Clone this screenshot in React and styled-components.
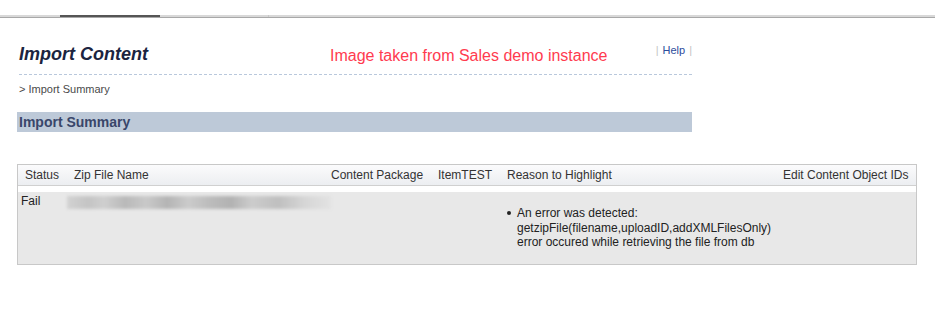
import React from 'react'
import styled, { createGlobalStyle } from 'styled-components'

const GlobalStyle = createGlobalStyle`
  body {
    margin: 0;
    background: #fff;
    font-family: "Liberation Sans", Arial, sans-serif;
  }
`

const TopNav = styled.div`
  display: flex;
  align-items: flex-end;
  height: 17px;
  border-bottom: 1px solid #a8a8a8;
`
const NavTab = styled.div`
  width: ${(p) => p.width}px;
  height: 2px;
  background: ${(p) => (p.active ? '#555' : '#d8d8d8')};
  border-right: ${(p) => (p.divider ? '1px solid #c8c8c8' : 'none')};
`

const Page = styled.div`
  padding: 0 17px;
`
const Header = styled.div`
  width: 675px;
`
const TitleRow = styled.div`
  display: grid;
  grid-template-columns: 311px 1fr auto;
  align-items: center;
  height: 56px;
  margin-left: 2px;
  border-bottom: 1px dashed #b9c8dc;
`
const Title = styled.h1`
  margin: 16px 0 0 0;
  font-size: 18px;
  font-style: italic;
  font-weight: bold;
  color: #1b2440;
`
const Annotation = styled.span`
  font-size: 16px;
  color: #ff3b4f;
  margin-top: 20px;
`
const HelpLinks = styled.div`
  align-self: start;
  margin-top: 26px;
  font-size: 11px;
  color: #c4c4c4;
`
const HelpLink = styled.a`
  color: #2c4c9c;
  text-decoration: none;
  margin: 0 4px;
`
const Breadcrumb = styled.div`
  padding: 8px 2px 0;
  height: 22px;
  font-size: 11px;
  color: #4a4a4a;
`
const SectionBar = styled.div`
  margin-top: 7px;
  height: 20px;
  line-height: 20px;
  padding-left: 2px;
  background: #bdc9d8;
  font-size: 14px;
  font-weight: bold;
  color: #39466a;
`

const Table = styled.div`
  margin-top: 32px;
  width: 898px;
  border: 1px solid #c8c8c8;
`
const Row = styled.div`
  display: grid;
  grid-template-columns: 49px 257px 107px 69px 276px 140px;
`
const HeadRow = styled(Row)`
  height: 20px;
  background: linear-gradient(#fbfbfc, #eceef1);
  border-bottom: 1px solid #d0d0d0;
`
const HeadCell = styled.div`
  padding-left: 7px;
  line-height: 20px;
  font-size: 12px;
  color: #333;
  white-space: nowrap;
`
const Spacer = styled.div`
  height: 6px;
  background: #fff;
`
const BodyRow = styled(Row)`
  height: 72px;
  background: #e8e8e8;
`
const BodyCell = styled.div`
  padding: ${(p) => p.pad || '2px 0 0 3px'};
  font-size: 12px;
  color: #222;
`
const Blurred = styled.div`
  height: 13px;
  width: 264px;
  background: linear-gradient(
    90deg,
    #d2d2d2 0%,
    #c4c4c4 8%,
    #cfcfcf 14%,
    #b9b9b9 22%,
    #c9c9c9 30%,
    #b4b4b4 38%,
    #cbcbcb 46%,
    #bcbcbc 54%,
    #b2b2b2 62%,
    #cccccc 70%,
    #bfbfbf 80%,
    #d6d6d6 90%,
    #e2e2e2 100%
  );
  filter: blur(1.5px);
`
const Bullets = styled.ul`
  margin: 0;
  padding: 0;
  list-style: none;
`
const Bullet = styled.li`
  display: flex;
  gap: 6px;
  font-size: 12px;
  line-height: 14.5px;
  color: #222;
  &::before {
    content: '';
    flex: none;
    width: 4px;
    height: 4px;
    margin-top: 5px;
    border-radius: 50%;
    background: #222;
  }
`

const columns = ['Status', 'Zip File Name', 'Content Package', 'ItemTEST', 'Reason to Highlight', 'Edit Content Object IDs']

const App = () => {
  return (
    <>
      <GlobalStyle />
      <TopNav>
        <NavTab width={60} />
        <NavTab width={100} active />
        <NavTab width={108} divider />
        <NavTab width={667} />
      </TopNav>
      <Page>
        <Header>
          <TitleRow>
            <Title>Import Content</Title>
            <Annotation>Image taken from Sales demo instance</Annotation>
            <HelpLinks>
              |<HelpLink href="#">Help</HelpLink>|
            </HelpLinks>
          </TitleRow>
          <Breadcrumb>&gt; Import Summary</Breadcrumb>
          <SectionBar>Import Summary</SectionBar>
        </Header>
        <Table>
          <HeadRow>
            {columns.map((c) => (
              <HeadCell key={c}>{c}</HeadCell>
            ))}
          </HeadRow>
          <Spacer />
          <BodyRow>
            <BodyCell>Fail</BodyCell>
            <BodyCell pad="4px 0 0 0">
              <Blurred />
            </BodyCell>
            <BodyCell />
            <BodyCell />
            <BodyCell pad="14px 0 0 7px">
              <Bullets>
                <Bullet>
                  <span>
                    An error was detected:
                    <br />
                    getzipFile(filename,uploadID,addXMLFilesOnly)
                    <br />
                    error occured while retrieving the file from db
                  </span>
                </Bullet>
              </Bullets>
            </BodyCell>
            <BodyCell />
          </BodyRow>
        </Table>
      </Page>
    </>
  )
}

export default App
